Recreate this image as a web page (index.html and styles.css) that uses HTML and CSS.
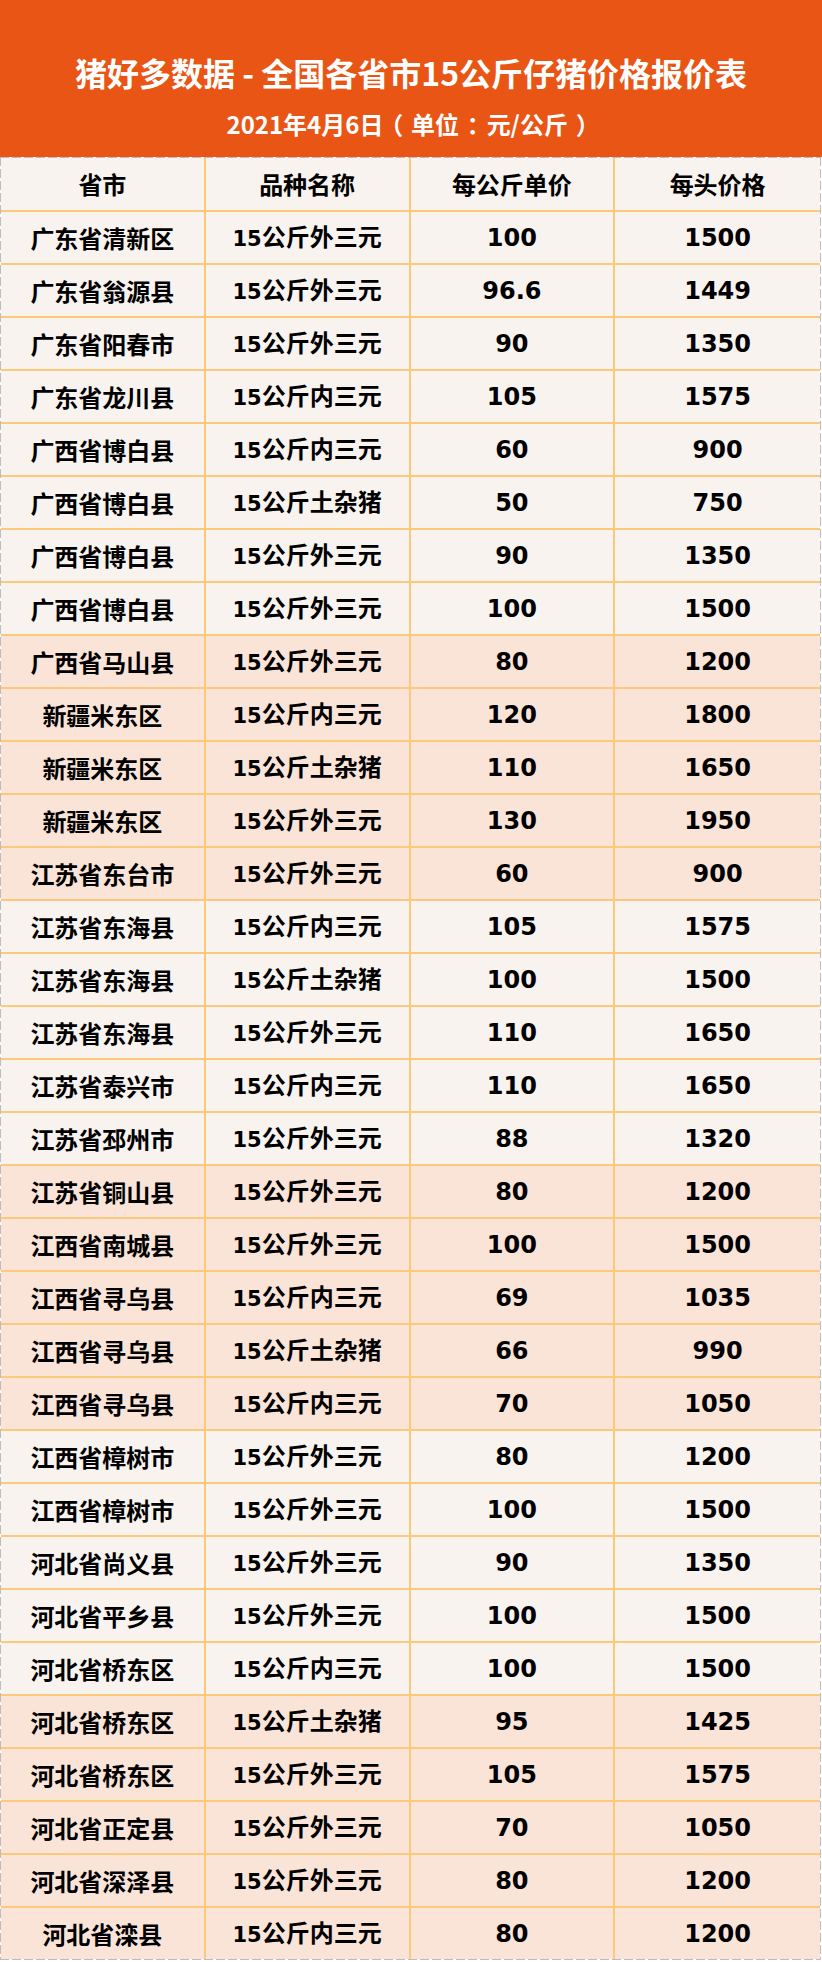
FILE: index.html
```html
<!DOCTYPE html>
<html lang="zh-CN">
<head>
<meta charset="utf-8">
<title>猪好多数据 - 全国各省市15公斤仔猪价格报价表</title>
<link rel="stylesheet" href="styles.css">
</head>
<body>
<div class="page">
  <header class="banner">
    <h1 class="title">猪好多数据 - 全国各省市15公斤仔猪价格报价表</h1>
    <p class="subtitle">2021年4月6日<span class="punct">（</span>单位<span class="punct">：</span>元/公斤<span class="punct">）</span></p>
  </header>
  <div class="frame">
    <table class="prices">
      <thead>
        <tr><th>省市</th><th>品种名称</th><th>每公斤单价</th><th>每头价格</th></tr>
      </thead>
      <tbody>
        <tr><td>广东省清新区</td><td><span class="n">15</span>公斤外三元</td><td class="n">100</td><td class="n">1500</td></tr>
        <tr><td>广东省翁源县</td><td><span class="n">15</span>公斤外三元</td><td class="n">96.6</td><td class="n">1449</td></tr>
        <tr><td>广东省阳春市</td><td><span class="n">15</span>公斤外三元</td><td class="n">90</td><td class="n">1350</td></tr>
        <tr><td>广东省龙川县</td><td><span class="n">15</span>公斤内三元</td><td class="n">105</td><td class="n">1575</td></tr>
        <tr><td>广西省博白县</td><td><span class="n">15</span>公斤内三元</td><td class="n">60</td><td class="n">900</td></tr>
        <tr><td>广西省博白县</td><td><span class="n">15</span>公斤土杂猪</td><td class="n">50</td><td class="n">750</td></tr>
        <tr><td>广西省博白县</td><td><span class="n">15</span>公斤外三元</td><td class="n">90</td><td class="n">1350</td></tr>
        <tr><td>广西省博白县</td><td><span class="n">15</span>公斤外三元</td><td class="n">100</td><td class="n">1500</td></tr>
        <tr class="alt"><td>广西省马山县</td><td><span class="n">15</span>公斤外三元</td><td class="n">80</td><td class="n">1200</td></tr>
        <tr class="alt"><td>新疆米东区</td><td><span class="n">15</span>公斤内三元</td><td class="n">120</td><td class="n">1800</td></tr>
        <tr class="alt"><td>新疆米东区</td><td><span class="n">15</span>公斤土杂猪</td><td class="n">110</td><td class="n">1650</td></tr>
        <tr class="alt"><td>新疆米东区</td><td><span class="n">15</span>公斤外三元</td><td class="n">130</td><td class="n">1950</td></tr>
        <tr class="alt"><td>江苏省东台市</td><td><span class="n">15</span>公斤外三元</td><td class="n">60</td><td class="n">900</td></tr>
        <tr><td>江苏省东海县</td><td><span class="n">15</span>公斤内三元</td><td class="n">105</td><td class="n">1575</td></tr>
        <tr><td>江苏省东海县</td><td><span class="n">15</span>公斤土杂猪</td><td class="n">100</td><td class="n">1500</td></tr>
        <tr><td>江苏省东海县</td><td><span class="n">15</span>公斤外三元</td><td class="n">110</td><td class="n">1650</td></tr>
        <tr><td>江苏省泰兴市</td><td><span class="n">15</span>公斤内三元</td><td class="n">110</td><td class="n">1650</td></tr>
        <tr><td>江苏省邳州市</td><td><span class="n">15</span>公斤外三元</td><td class="n">88</td><td class="n">1320</td></tr>
        <tr class="alt"><td>江苏省铜山县</td><td><span class="n">15</span>公斤外三元</td><td class="n">80</td><td class="n">1200</td></tr>
        <tr class="alt"><td>江西省南城县</td><td><span class="n">15</span>公斤外三元</td><td class="n">100</td><td class="n">1500</td></tr>
        <tr class="alt"><td>江西省寻乌县</td><td><span class="n">15</span>公斤内三元</td><td class="n">69</td><td class="n">1035</td></tr>
        <tr class="alt"><td>江西省寻乌县</td><td><span class="n">15</span>公斤土杂猪</td><td class="n">66</td><td class="n">990</td></tr>
        <tr class="alt"><td>江西省寻乌县</td><td><span class="n">15</span>公斤内三元</td><td class="n">70</td><td class="n">1050</td></tr>
        <tr><td>江西省樟树市</td><td><span class="n">15</span>公斤外三元</td><td class="n">80</td><td class="n">1200</td></tr>
        <tr><td>江西省樟树市</td><td><span class="n">15</span>公斤外三元</td><td class="n">100</td><td class="n">1500</td></tr>
        <tr><td>河北省尚义县</td><td><span class="n">15</span>公斤外三元</td><td class="n">90</td><td class="n">1350</td></tr>
        <tr><td>河北省平乡县</td><td><span class="n">15</span>公斤外三元</td><td class="n">100</td><td class="n">1500</td></tr>
        <tr><td>河北省桥东区</td><td><span class="n">15</span>公斤内三元</td><td class="n">100</td><td class="n">1500</td></tr>
        <tr class="alt"><td>河北省桥东区</td><td><span class="n">15</span>公斤土杂猪</td><td class="n">95</td><td class="n">1425</td></tr>
        <tr class="alt"><td>河北省桥东区</td><td><span class="n">15</span>公斤外三元</td><td class="n">105</td><td class="n">1575</td></tr>
        <tr class="alt"><td>河北省正定县</td><td><span class="n">15</span>公斤外三元</td><td class="n">70</td><td class="n">1050</td></tr>
        <tr class="alt"><td>河北省深泽县</td><td><span class="n">15</span>公斤外三元</td><td class="n">80</td><td class="n">1200</td></tr>
        <tr class="alt"><td>河北省滦县</td><td><span class="n">15</span>公斤内三元</td><td class="n">80</td><td class="n">1200</td></tr>
      </tbody>
    </table>
  </div>
</div>
</body>
</html>
```

FILE: styles.css
```css
html, body {
  margin: 0;
  padding: 0;
  background: #ffffff;
}

.page {
  width: 822px;
  font-family: "Noto Sans CJK SC", "Noto Sans", sans-serif;
  font-weight: 700;
}

.banner {
  background: #e95515;
  color: #ffffff;
  height: 157px;
  box-sizing: border-box;
  padding-top: 51px;
  text-align: center;
}

.title {
  margin: 0;
  font-size: 32px;
  line-height: 42px;
  font-weight: 700;
}

.subtitle {
  margin: 16px 0 0;
  font-size: 24px;
  line-height: 30px;
  font-weight: 700;
}

.subtitle .punct {
  display: inline-block;
  width: 1.15em;
  text-align: center;
  font-feature-settings: "halt" 1;
}

.frame {
  width: 821px;
  box-sizing: border-box;
  padding: 1px;
  background:
    repeating-linear-gradient(to right, #bdbdbd 0 9px, transparent 9px 12px) top left / 100% 1px no-repeat,
    repeating-linear-gradient(to right, #bdbdbd 0 9px, transparent 9px 12px) bottom left / 100% 1px no-repeat,
    repeating-linear-gradient(to bottom, #bdbdbd 0 9px, transparent 9px 12px) top left / 1px 100% no-repeat,
    repeating-linear-gradient(to bottom, #bdbdbd 0 9px, transparent 9px 12px) top right / 1px 100% no-repeat;
}

.prices {
  width: 100%;
  border-collapse: separate;
  border-spacing: 0;
  table-layout: fixed;
  color: #000000;
}

.prices th,
.prices td {
  height: 51px;
  padding: 0;
  text-align: center;
  vertical-align: middle;
  font-size: 24px;
  line-height: 30px;
  font-weight: 700;
  background: #f8f3ef;
  border-right: 2px solid #fcc97a;
  border-bottom: 2px solid #fcc97a;
  box-sizing: content-box;
}

.prices th {
  height: 52px;
}

.prices th:last-child,
.prices td:last-child {
  border-right: none;
}

.prices tbody tr:last-child td {
  border-bottom: none;
}

.prices tr.alt td {
  background: #fae4d8;
}

.n {
  font-family: "DejaVu Sans", "Noto Sans CJK SC", sans-serif;
  font-size: 21px;
}
```
